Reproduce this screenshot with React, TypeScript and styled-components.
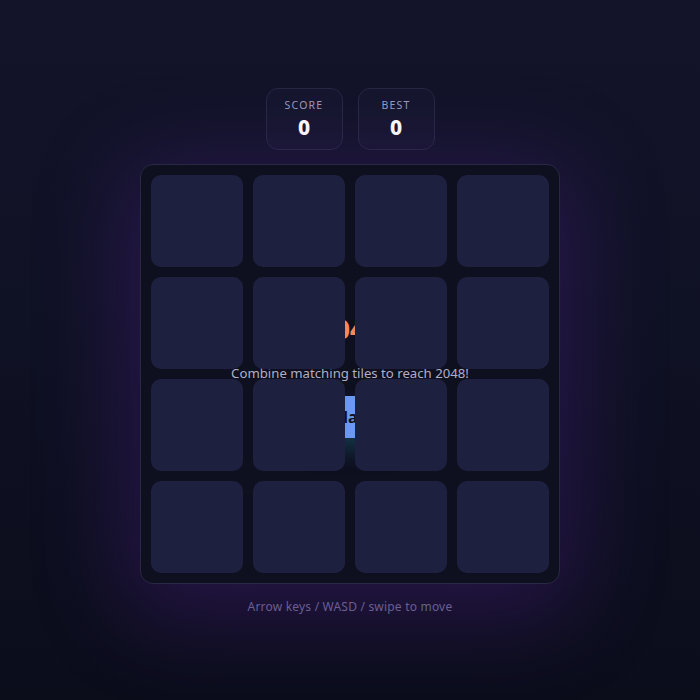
import React from "react";
import styled, { createGlobalStyle } from "styled-components";

const Global = createGlobalStyle`
  html, body { margin: 0; padding: 0; }
  body {
    background: linear-gradient(180deg, #13142a 0%, #0f1124 50%, #0b0d1b 100%);
    font-family: "Noto Sans", "Open Sans", sans-serif;
    color: #fff;
    min-height: 100vh;
  }
`;

const Page = styled.div`
  box-sizing: border-box;
  min-height: 100vh;
  padding-top: 3px;
  display: flex;
  flex-direction: column;
  align-items: center;
  justify-content: center;
`;

const Scores = styled.div`
  display: flex;
  gap: 15px;
  margin-bottom: 14px;
`;

const ScoreBox = styled.div`
  min-width: 77px;
  box-sizing: border-box;
  height: 62px;
  padding: 9px 18px 0;
  border: 1px solid #262843;
  border-radius: 12px;
  background: #15162d;
  display: flex;
  flex-direction: column;
  align-items: center;
`;

const ScoreLabel = styled.div`
  font-size: 10.5px;
  letter-spacing: 1.2px;
  color: #9b9bb8;
  line-height: 14px;
`;

const ScoreValue = styled.div`
  font-size: 21px;
  font-weight: 800;
  line-height: 30px;
  color: #ffffff;
`;

const Board = styled.div`
  position: relative;
  box-sizing: border-box;
  width: 420px;
  padding: 10px;
  border: 1px solid #272944;
  border-radius: 13px;
  background: #0e0f1f;
  box-shadow: 0 18px 90px 16px rgba(105, 40, 175, 0.28);
`;

const Grid = styled.div`
  position: relative;
  z-index: 1;
  display: grid;
  grid-template-columns: repeat(4, 92px);
  grid-auto-rows: 92px;
  gap: 10px;
`;

const Cell = styled.div`
  background: #1e2040;
  border-radius: 10px;
`;

const Overlay = styled.div`
  position: absolute;
  inset: 0;
  z-index: 0;
  display: flex;
  flex-direction: column;
  align-items: center;
  justify-content: center;
  padding-top: 2px;
`;

const Title = styled.div`
  font-size: 26px;
  font-weight: 800;
  line-height: 32px;
  color: #f28a5b;
  margin-bottom: 19px;
`;

const Subtitle = styled.div`
  font-size: 13.2px;
  line-height: 18px;
  color: #aeaec6;
  margin-bottom: 14px;
`;

const PlayButton = styled.button`
  font-family: inherit;
  font-size: 16px;
  font-weight: 700;
  color: #0f1020;
  border: none;
  border-radius: 10px;
  height: 42px;
  padding: 0 30px;
  background: linear-gradient(90deg, #7a86f4, #6b98f1 50%, #5cb0ea);
  box-shadow: 0 12px 22px rgba(30, 110, 130, 0.4);
`;

const Hint = styled.div`
  margin-top: 14px;
  font-size: 12px;
  letter-spacing: 0.2px;
  color: #6b6a8e;
`;

export default function App() {
  const cells = Array.from({ length: 16 }, (_, i) => i);
  return (
    <>
      <Global />
      <Page>
        <Scores>
          <ScoreBox>
            <ScoreLabel>SCORE</ScoreLabel>
            <ScoreValue>0</ScoreValue>
          </ScoreBox>
          <ScoreBox>
            <ScoreLabel>BEST</ScoreLabel>
            <ScoreValue>0</ScoreValue>
          </ScoreBox>
        </Scores>
        <Board>
          <Overlay>
            <Title>2048</Title>
            <Subtitle>Combine matching tiles to reach 2048!</Subtitle>
            <PlayButton>Play</PlayButton>
          </Overlay>
          <Grid>
            {cells.map((i) => (
              <Cell key={i} />
            ))}
          </Grid>
        </Board>
        <Hint>Arrow keys / WASD / swipe to move</Hint>
      </Page>
    </>
  );
}
